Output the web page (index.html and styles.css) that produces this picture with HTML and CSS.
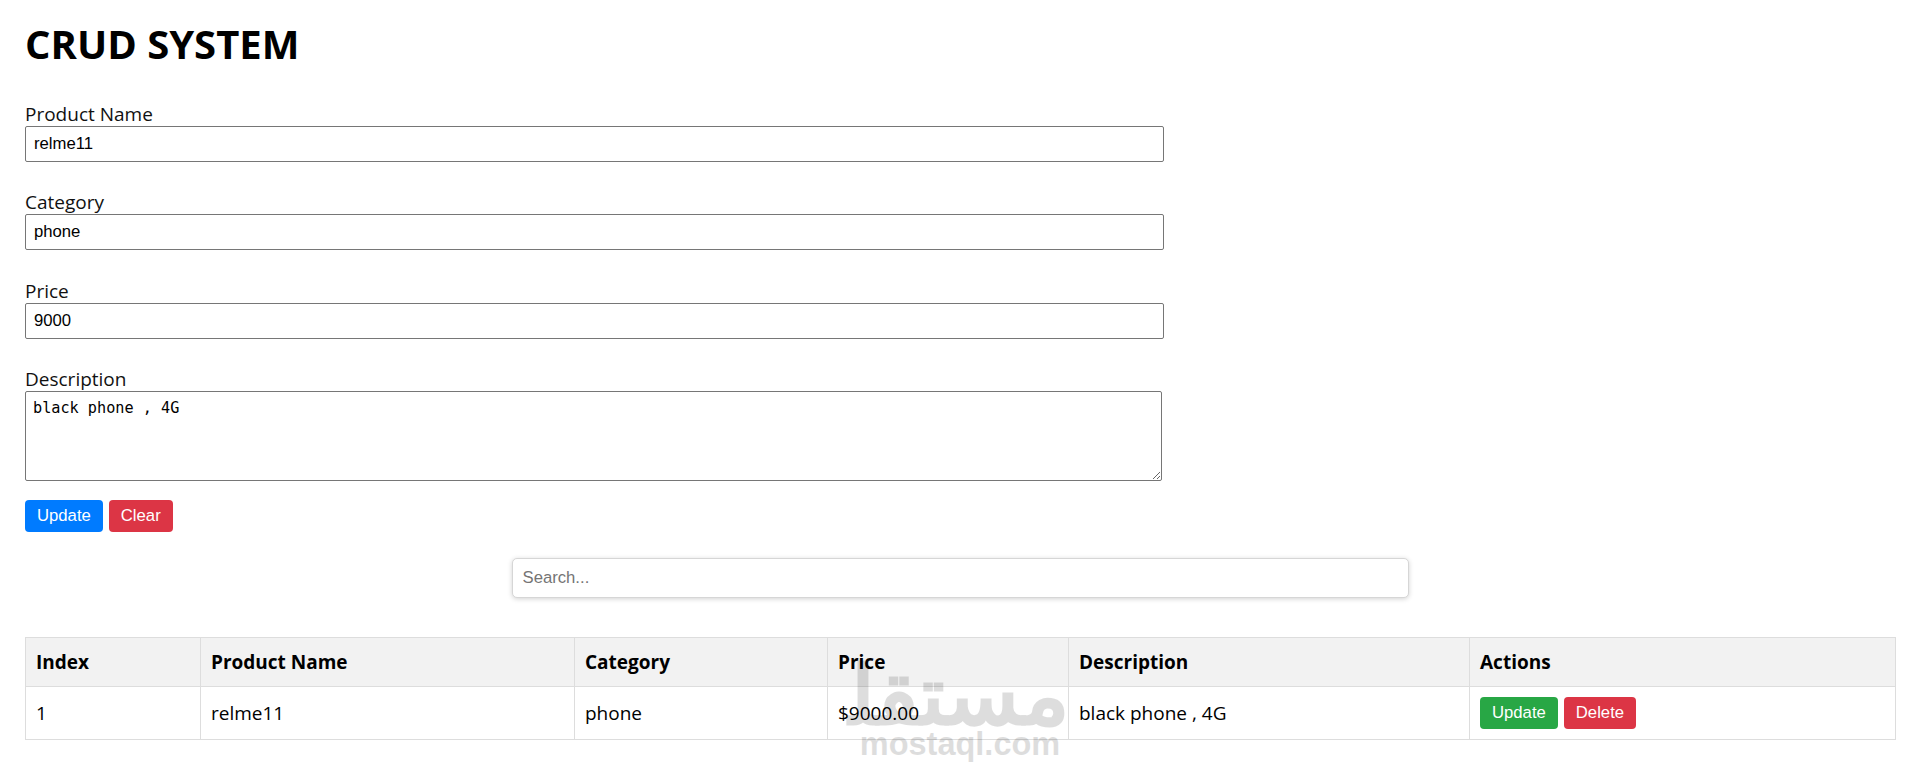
FILE: index.html
```html
<!DOCTYPE html>
<html lang="en">
<head>
<meta charset="utf-8">
<title>CRUD SYSTEM</title>
<link rel="stylesheet" href="styles.css">
</head>
<body>
<div class="page">
  <h1 class="title">CRUD SYSTEM</h1>

  <div class="form">
    <div class="group">
      <label class="label" for="pname">Product Name</label>
      <input class="field" id="pname" type="text" value="relme11">
    </div>
    <div class="group">
      <label class="label" for="pcat">Category</label>
      <input class="field" id="pcat" type="text" value="phone">
    </div>
    <div class="group">
      <label class="label" for="pprice">Price</label>
      <input class="field" id="pprice" type="text" value="9000">
    </div>
    <div class="group group-last">
      <label class="label" for="pdesc">Description</label>
      <textarea class="area" id="pdesc">black phone , 4G</textarea>
    </div>
    <div class="btn-row">
      <button class="btn btn-blue" type="button">Update</button>
      <button class="btn btn-red" type="button">Clear</button>
    </div>
  </div>

  <div class="search-wrap">
    <input class="search" type="text" placeholder="Search...">
  </div>

  <table class="table">
    <colgroup>
      <col class="c-index">
      <col class="c-name">
      <col class="c-cat">
      <col class="c-price">
      <col class="c-desc">
      <col class="c-actions">
    </colgroup>
    <thead>
      <tr>
        <th>Index</th>
        <th>Product Name</th>
        <th>Category</th>
        <th>Price</th>
        <th>Description</th>
        <th>Actions</th>
      </tr>
    </thead>
    <tbody>
      <tr>
        <td>1</td>
        <td>relme11</td>
        <td>phone</td>
        <td>$9000.00</td>
        <td>black phone , 4G</td>
        <td class="td-actions">
          <div class="actions">
            <button class="btn btn-green" type="button">Update</button>
            <button class="btn btn-red" type="button">Delete</button>
          </div>
        </td>
      </tr>
    </tbody>
  </table>
</div>

<div class="watermark" aria-hidden="true">
  <div class="wm-ar">مستقل&zwj;</div>
  <div class="wm-en">mostaql.com</div>
</div>
</body>
</html>
```

FILE: styles.css
```css
* {
  box-sizing: border-box;
}

html, body {
  margin: 0;
  padding: 0;
  background: #ffffff;
}

body {
  font-family: "Open Sans", "Noto Sans", sans-serif;
  font-size: 19px;
  color: #000;
}

.page {
  padding: 0 25px;
}

.title {
  margin: 17px 0 30px;
  font-size: 40px;
  line-height: 54px;
  font-weight: 700;
  color: #000;
}

.group {
  margin-bottom: 27.33px;
}

.group-last {
  margin-bottom: 19px;
}

.label {
  display: block;
  padding-top: 2px;
  line-height: 23px;
  color: #111;
}

.field {
  display: block;
  width: 1139px;
  height: 36px;
  margin: 0;
  padding: 0 8px;
  border: 1px solid #767676;
  border-radius: 2px;
  font-family: "Liberation Sans", Arial, sans-serif;
  font-size: 16.7px;
  color: #000;
  background: #fff;
}

.area {
  display: block;
  width: 1137px;
  height: 90px;
  margin: 0;
  padding: 7px 7px;
  border: 1px solid #767676;
  border-radius: 2px;
  font-family: "DejaVu Sans Mono", "Liberation Mono", monospace;
  font-size: 15.2px;
  line-height: 19px;
  color: #000;
  background: #fff;
  resize: vertical;
}

.btn-row {
  display: flex;
  gap: 6px;
}

.btn {
  border: none;
  border-radius: 4px;
  padding: 0 12px;
  height: 32px;
  font-family: "Liberation Sans", Arial, sans-serif;
  font-size: 16.7px;
  color: #fff;
  cursor: pointer;
}

.btn-blue {
  background: #007bff;
}

.btn-red {
  background: #dc3545;
}

.btn-green {
  background: #28a745;
}

.search-wrap {
  display: flex;
  justify-content: center;
  margin-top: 26px;
  margin-bottom: 39px;
}

.search {
  width: 897px;
  height: 40px;
  padding: 0 10px;
  border: 1px solid #d6d6d6;
  border-radius: 5px;
  box-shadow: 0 1px 5px rgba(0, 0, 0, 0.18);
  font-family: "Liberation Sans", Arial, sans-serif;
  font-size: 16.7px;
  color: #000;
  background: #fff;
  outline: none;
}

.search::placeholder {
  color: #757575;
}

.table {
  width: 1870px;
  table-layout: fixed;
  border-collapse: collapse;
  border: 1px solid #dddddd;
}

.c-index { width: 175px; }
.c-name { width: 374px; }
.c-cat { width: 253px; }
.c-price { width: 241px; }
.c-desc { width: 401px; }
.c-actions { width: 426px; }

.table th,
.table td {
  border: 1px solid #dddddd;
  text-align: left;
  line-height: 25px;
  vertical-align: middle;
}

.table th {
  padding: 12.5px 10px 10.5px;
  background: #f2f2f2;
  font-weight: 700;
}

.table td {
  padding: 11px 10px 9px;
}

.table td.td-actions {
  padding: 10px 10px;
}

.actions {
  display: flex;
  gap: 6px;
}

.watermark {
  position: absolute;
  left: 850px;
  top: 656px;
  width: 220px;
  display: flex;
  flex-direction: column;
  align-items: center;
  pointer-events: none;
  color: #000;
  opacity: 0.13;
}

.wm-ar {
  font-family: "DejaVu Sans", sans-serif;
  font-weight: 400;
  font-size: 82px;
  line-height: 80px;
  -webkit-text-stroke: 3px #000;
  transform: translateX(-1px) scaleX(1.05);
}

.wm-en {
  font-family: "Liberation Sans", Arial, sans-serif;
  font-weight: 700;
  font-size: 32.5px;
  line-height: 34px;
  margin-top: -9px;
}
```
